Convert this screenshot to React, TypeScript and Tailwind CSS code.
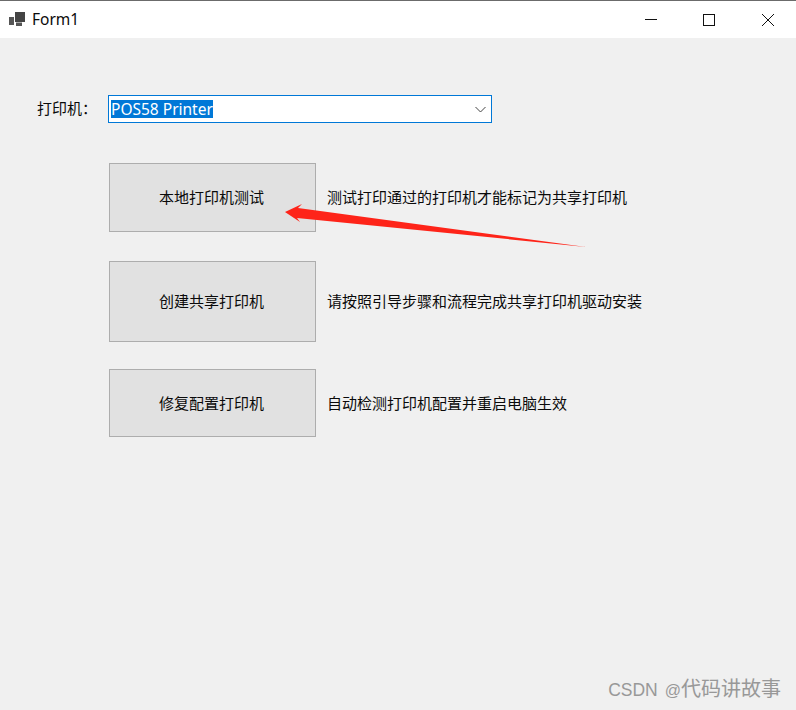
const FONT = "font-['Noto_Sans','Noto_Sans_CJK_SC',sans-serif]"

const ROWS = [
  { label: '本地打印机测试', note: '测试打印通过的打印机才能标记为共享打印机', height: 'h-[69px]' },
  { label: '创建共享打印机', note: '请按照引导步骤和流程完成共享打印机驱动安装', height: 'h-[81px]' },
  { label: '修复配置打印机', note: '自动检测打印机配置并重启电脑生效', height: 'h-[68px]' },
]

function AppIcon() {
  return (
    <svg width="16" height="16" viewBox="0 0 16 16" className="shrink-0">
      <rect x="6" y="0" width="10" height="10" fill="#444" />
      <rect x="0" y="5" width="5" height="8" fill="#555" />
      <rect x="7" y="10.5" width="6" height="3.5" fill="#555" />
    </svg>
  )
}

function WindowButtons() {
  return (
    <div className="flex items-center">
      <svg width="14" height="14" viewBox="0 0 14 14" className="mr-[44px]">
        <path d="M1 6.5h12" stroke="#111" strokeWidth="1" />
      </svg>
      <svg width="14" height="14" viewBox="0 0 14 14" className="mr-[45px]">
        <rect x="1.5" y="1.5" width="11" height="11" fill="none" stroke="#111" strokeWidth="1" />
      </svg>
      <svg width="14" height="14" viewBox="0 0 14 14" className="mr-[21px]">
        <path d="M1 1l12 12M13 1L1 13" stroke="#111" strokeWidth="1" />
      </svg>
    </div>
  )
}

function Row({ label, note, height, gap }: { label: string; note: string; height: string; gap: string }) {
  return (
    <div className={`flex items-center ${gap}`}>
      <button className={`w-[207px] ${height} shrink-0 bg-[#e1e1e1] border border-[#adadad] text-[15px] text-[#0a0a0a] pr-[2px]`}>
        {label}
      </button>
      <span className="ml-[11px] text-[15px] text-[#0a0a0a]">{note}</span>
    </div>
  )
}

export default function App() {
  return (
    <div className={`relative w-[796px] h-[710px] overflow-hidden bg-[#f0f0f0] flex flex-col ${FONT}`}>
      <div className="h-px bg-[#6b6b6b]" />
      <div className="h-[37px] bg-white flex items-center justify-between pl-[9px]">
        <div className="flex items-center gap-[7px]">
          <AppIcon />
          <span className="text-[15.5px] text-[#0a0a0a]">Form1</span>
        </div>
        <WindowButtons />
      </div>

      <div className="pl-[37px] pt-[57px]">
        <div className="flex items-center">
          <span className="w-[71px] text-[15px] text-[#0a0a0a] pb-[2px]">打印机：</span>
          <div className="w-[384px] h-[28px] bg-white border border-[#0078d7] flex items-center justify-between pl-[2px] pr-[5px]">
            <span className="bg-[#0078d7] text-white text-[15.5px] leading-[18px]">POS58 Printer</span>
            <svg width="11" height="7" viewBox="0 0 11 7">
              <path d="M0.5 1l5 5 5-5" fill="none" stroke="#444" strokeWidth="1" />
            </svg>
          </div>
        </div>

        <div className="ml-[72px] mt-[40px] flex flex-col">
          <Row {...ROWS[0]} gap="" />
          <Row {...ROWS[1]} gap="mt-[29px]" />
          <Row {...ROWS[2]} gap="mt-[27px]" />
        </div>
      </div>

      {/* annotation drawn over the window */}
      <svg width="796" height="710" viewBox="0 0 796 710" className="absolute left-0 top-0 pointer-events-none">
        <path d="M285 212L302 204L298 208L586 247L297 218L300 222Z" fill="#fe2419" />
      </svg>

      <span className="absolute right-[15px] bottom-[6px] leading-[26px] text-[#8f8f8f] opacity-90 flex items-baseline">
        <span className="font-['Liberation_Sans',sans-serif] text-[17.5px] mr-[7px]">CSDN</span>
        <span className="font-['Liberation_Sans',sans-serif] text-[16px]">@</span>
        <span className="text-[20px]">代码讲故事</span>
      </span>
    </div>
  )
}
